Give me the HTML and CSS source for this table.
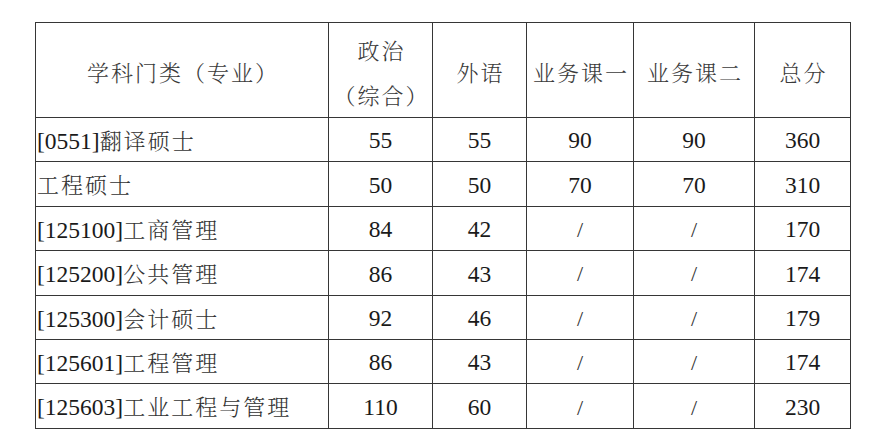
FILE: index.html
```html
<!DOCTYPE html>
<html lang="zh-CN">
<head>
<meta charset="utf-8">
<title>复试分数线</title>
<link rel="stylesheet" href="styles.css">
</head>
<body>
<table class="scores">
  <colgroup>
    <col class="c-name">
    <col class="c-pol">
    <col class="c-lang">
    <col class="c-b1">
    <col class="c-b2">
    <col class="c-total">
  </colgroup>
  <thead>
    <tr class="head">
      <th>学科门类（专业）</th>
      <th><span class="line">政治</span><span class="line">（综合）</span></th>
      <th>外语</th>
      <th>业务课一</th>
      <th>业务课二</th>
      <th>总分</th>
    </tr>
  </thead>
  <tbody>
    <tr><td class="name"><span class="code">[0551]</span><span class="cn">翻译硕士</span></td><td>55</td><td>55</td><td>90</td><td>90</td><td>360</td></tr>
    <tr><td class="name"><span class="cn">工程硕士</span></td><td>50</td><td>50</td><td>70</td><td>70</td><td>310</td></tr>
    <tr><td class="name"><span class="code">[125100]</span><span class="cn">工商管理</span></td><td>84</td><td>42</td><td class="na">/</td><td class="na">/</td><td>170</td></tr>
    <tr><td class="name"><span class="code">[125200]</span><span class="cn">公共管理</span></td><td>86</td><td>43</td><td class="na">/</td><td class="na">/</td><td>174</td></tr>
    <tr><td class="name"><span class="code">[125300]</span><span class="cn">会计硕士</span></td><td>92</td><td>46</td><td class="na">/</td><td class="na">/</td><td>179</td></tr>
    <tr><td class="name"><span class="code">[125601]</span><span class="cn">工程管理</span></td><td>86</td><td>43</td><td class="na">/</td><td class="na">/</td><td>174</td></tr>
    <tr><td class="name"><span class="code">[125603]</span><span class="cn">工业工程与管理</span></td><td>110</td><td>60</td><td class="na">/</td><td class="na">/</td><td>230</td></tr>
  </tbody>
</table>
</body>
</html>
```

FILE: styles.css
```css
html, body {
  margin: 0;
  background: #ffffff;
}

body {
  padding: 22px 0 0 35px;
  font-family: "Liberation Serif", "Times New Roman", "Noto Serif CJK SC", serif;
  font-size: 23.5px;
  color: #1a1a1a;
}

.scores {
  border-collapse: collapse;
  table-layout: fixed;
  width: 815px;
}

.c-name { width: 293px; }
.c-pol { width: 104px; }
.c-lang { width: 94px; }
.c-b1 { width: 107px; }
.c-b2 { width: 121px; }
.c-total { width: 96px; }

.scores th,
.scores td {
  border: 1px solid #363636;
  padding: 0;
  text-align: center;
  vertical-align: middle;
  line-height: 1;
}

.scores th {
  font-family: "Noto Serif CJK SC", "Noto Sans CJK SC", serif;
  font-weight: 300;
  font-size: 22px;
  color: #3a3a3a;
  height: 90px;
  padding-top: 4px;
  letter-spacing: 2px;
  text-indent: 2px;
}

.scores th .line {
  display: block;
  line-height: 45px;
}

.scores td {
  height: 40.4px;
  padding-top: 3px;
}

.scores td.name {
  text-align: left;
  padding-left: 1px;
}

.code {
  font-family: "Liberation Serif", "Times New Roman", serif;
}

.cn {
  font-family: "Noto Serif CJK SC", "Noto Sans CJK SC", serif;
  font-weight: 300;
  font-size: 22px;
  color: #333333;
  letter-spacing: 2px;
}

.scores td.na {
  font-size: 22px;
  color: #333333;
}
```
